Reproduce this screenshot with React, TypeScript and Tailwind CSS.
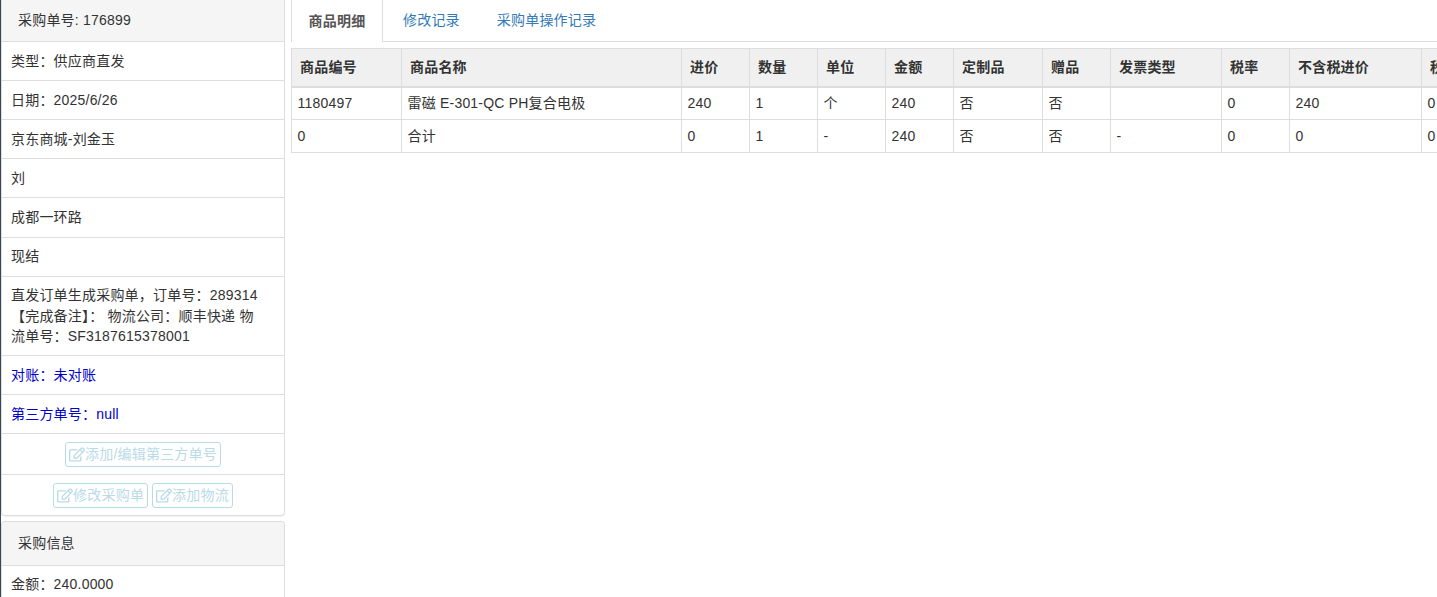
import { FaRegEdit } from 'react-icons/fa';

const headers = [
  { label: '商品编号', width: 'w-[110px]' },
  { label: '商品名称', width: 'w-[280px]' },
  { label: '进价', width: 'w-[68px]' },
  { label: '数量', width: 'w-[68px]' },
  { label: '单位', width: 'w-[68px]' },
  { label: '金额', width: 'w-[68px]' },
  { label: '定制品', width: 'w-[89px]' },
  { label: '赠品', width: 'w-[68px]' },
  { label: '发票类型', width: 'w-[111px]' },
  { label: '税率', width: 'w-[68px]' },
  { label: '不含税进价', width: 'w-[132px]' },
  { label: '税额', width: 'w-[68px]' },
];

const rows = [
  ['1180497', '雷磁 E-301-QC PH复合电极', '240', '1', '个', '240', '否', '否', '', '0', '240', '0'],
  ['0', '合计', '0', '1', '-', '240', '否', '否', '-', '0', '0', '0'],
];

function Row({ children, className = 'py-[9px] leading-[20px]' }: { children: React.ReactNode; className?: string }) {
  return <div className={`whitespace-nowrap border-b border-[#ddd] px-[9px] ${className}`}>{children}</div>;
}

function ActionButton({ label }: { label: string }) {
  return (
    <span className="inline-flex h-[25px] items-center rounded-[3px] border border-[#b9dbe7] px-[3px] text-[#b9dbe7]">
      <FaRegEdit className="h-[15px] w-[16px]" />
      {label}
    </span>
  );
}

export default function App() {
  return (
    <div
      className="flex h-[597px] overflow-hidden bg-white text-[14px] tracking-[0.2px] text-[#333]"
      style={{ fontFamily: '"Liberation Sans", "Noto Sans CJK SC", sans-serif' }}
    >
      {/* left column */}
      <div className="w-[286px] shrink-0 border-l border-[#3b4656] pr-px">
        <div className="rounded-b-[4px] border border-t-0 border-[#ddd] shadow-[0_1px_1px_rgba(0,0,0,0.05)]">
          <div className="h-[42px] border-b border-[#ddd] bg-[#f5f5f5] px-4 py-[10px] leading-[20px]">采购单号: 176899</div>
          <Row>类型：供应商直发</Row>
          <Row>日期：2025/6/26</Row>
          <Row>京东商城-刘金玉</Row>
          <Row>刘</Row>
          <Row className="pt-[9px] pb-[10px] leading-[20px]">成都一环路</Row>
          <Row className="pt-[8px] pb-[10px] leading-[20px]">现结</Row>
          <Row className="pt-[8px] pb-[8.5px] leading-[20.5px]">
            直发订单生成采购单，订单号：289314
            <br />
            【完成备注】： 物流公司：顺丰快递 物
            <br />
            流单号：SF3187615378001
          </Row>
          <Row className="py-[9px] leading-[20px] text-[#0000cd]">对账：未对账</Row>
          <Row className="py-[9px] leading-[20px] text-[#0000cd]">第三方单号：null</Row>
          <div className="flex h-[41px] items-center justify-center border-b border-[#ddd]">
            <ActionButton label="添加/编辑第三方单号" />
          </div>
          <div className="flex h-[40px] items-center justify-center gap-[4px]">
            <ActionButton label="修改采购单" />
            <ActionButton label="添加物流" />
          </div>
        </div>
        <div className="mt-[5px] rounded-t-[4px] border border-b-0 border-[#ddd]">
          <div className="h-[44px] rounded-t-[4px] border-b border-[#ddd] bg-[#f5f5f5] px-4 py-[11px] leading-[20px]">采购信息</div>
          <Row className="pt-[8px] pb-[10px] leading-[20px]">金额：240.0000</Row>
        </div>
      </div>

      {/* right column */}
      <div className="ml-[5px] min-w-0 flex-1 overflow-hidden">
        <div className="flex h-[42px] border-b border-[#ddd]">
          <div className="-mb-px flex h-[42px] w-[92px] items-center justify-center border-x border-[#ddd] bg-white font-bold text-[#555]">商品明细</div>
          <div className="flex items-center pl-[20px] pr-[37px] text-[#337ab7]">修改记录</div>
          <div className="flex items-center text-[#337ab7]">采购单操作记录</div>
        </div>
        <table className="mt-[6px] w-[1180px] table-fixed border-collapse">
          <thead>
            <tr className="h-[38px] bg-[#f0f0f0]">
              {headers.map((h) => (
                <th key={h.label} className={`${h.width} whitespace-nowrap border border-b-2 border-[#ddd] px-2 text-left font-bold`}>{h.label}</th>
              ))}
            </tr>
          </thead>
          <tbody>
            {rows.map((row) => (
              <tr key={row[0]} className="h-[33px]">
                {row.map((cell, i) => (
                  <td key={i} className="whitespace-nowrap border border-[#ddd] px-[5.5px]">{cell}</td>
                ))}
              </tr>
            ))}
          </tbody>
        </table>
      </div>
    </div>
  );
}
